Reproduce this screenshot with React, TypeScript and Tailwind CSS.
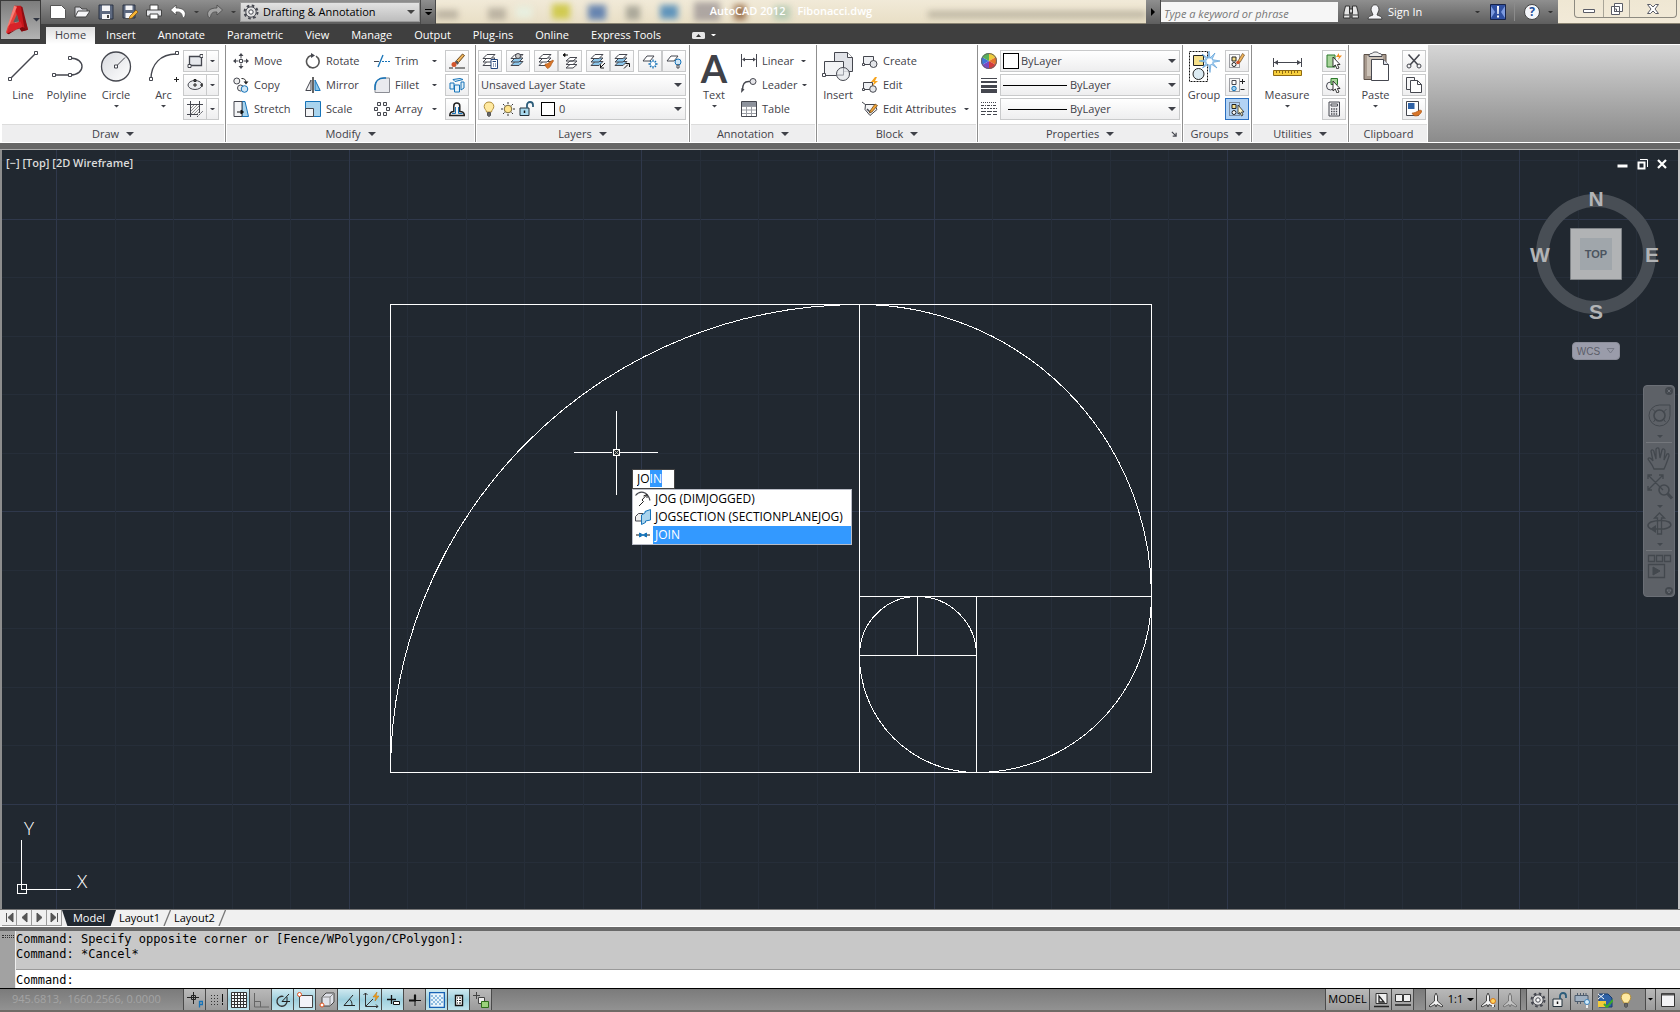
import { useEffect, useRef } from "react";
import type { ReactNode } from "react";
import clsx from "clsx";

interface ChildrenProps {
  children: ReactNode;
}

interface CaretProps {
  className?: string;
}

interface ToolProps {
  label: string;
  icon: ReactNode;
  menu?: boolean;
}

interface BigToolProps extends ToolProps {
  className: string;
}

interface PanelProps {
  title: string;
  className: string;
  menu?: boolean;
  launcher?: boolean;
  children: ReactNode;
}

const INK = "#45474f";
const BLUE = "#1673b8";

/* Small shared pieces */

const Caret = ({ className = "w-[5px] text-[#3f4148]" }: CaretProps) => (
  <svg viewBox="0 0 8 4" className={clsx("shrink-0", className)} fill="currentColor" aria-hidden="true">
    <path d="M0 0h8L4 4z" />
  </svg>
);

const Icon = ({ children }: ChildrenProps) => (
  <svg viewBox="0 0 16 16" className="size-4 shrink-0" fill="none" stroke={INK} aria-hidden="true">
    {children}
  </svg>
);

const BigIcon = ({ children }: ChildrenProps) => (
  <svg viewBox="0 0 32 32" className="size-8 shrink-0" fill="none" stroke={INK} aria-hidden="true">
    {children}
  </svg>
);

/* Icons: Draw */

const LineIcon = () => (
  <BigIcon>
    <path d="M3 29 28 4" strokeWidth="1.4" />
    <path d="M1.5 27.500h3v3h-3zM27.500 1.500h3v3h-3z" fill="#fff" />
  </BigIcon>
);

const PolylineIcon = () => (
  <BigIcon>
    <path d="M3 25h16M19 8c16 0 16 17 0 17" strokeWidth="1.4" />
    <path d="M1.500 23.500h3v3h-3zM17.500 23.500h3v3h-3zM17.500 6.500h3v3h-3z" fill="#fff" />
  </BigIcon>
);

const CircleIcon = () => (
  <BigIcon>
    <defs>
      <linearGradient id="disc" x1="0" y1="0" x2="1" y2="1">
        <stop offset="0" stopColor="#d9dbe0" />
        <stop offset="1" stopColor="#fff" />
      </linearGradient>
    </defs>
    <circle cx="16" cy="16.500" r="14.500" fill="url(#disc)" strokeWidth="1.300" />
    <path d="m16 16.500 9-9" />
    <path d="M14.500 15h3v3h-3z" fill="#fff" />
  </BigIcon>
);

const ArcIcon = () => (
  <BigIcon>
    <path d="M3 29C3 14 13 4 28 4" strokeWidth="1.400" />
    <path d="M1.500 27.500h3v3h-3zM27.500 1.500h3v3h-3z" fill="#fff" />
    <path d="M28.500 27v5M26 29.500h5" stroke="#222" />
  </BigIcon>
);

const RectangleIcon = () => (
  <Icon>
    <path d="M2.500 3.500h12v9h-12z" fill="#e6e8ec" strokeWidth="1.300" />
    <path d="M1 11.500h3v3H1zM13 1.500h3v3h-3z" fill="#fff" />
  </Icon>
);

const EllipseIcon = () => (
  <Icon>
    <ellipse cx="8" cy="8" rx="7" ry="4.500" fill="#eceef1" />
    <path d="M8 6v4M6 8h4M7 2.500h2v2H7zM14 7h2v2h-2z" stroke="#222" />
  </Icon>
);

const HatchIcon = () => (
  <Icon>
    <path d="M3.500 0v16M12.500 0v12M0 3.500h16M0 13.500h11" />
    <path d="M4 7l3-3M4 10l6-6M4 13l8-8M7 13l5-5M10 13l2-2" stroke="#777" strokeWidth=".8" />
    <path d="m10 16 6-6" strokeDasharray="2 1" />
  </Icon>
);

/* Icons: Modify */

const MoveIcon = () => (
  <Icon>
    <path d="M8 1.500v4M8 10.500v4M1.500 8h4M10.500 8h4M6.500 6.500h3v3h-3z" />
    <path d="m8 0 2.500 3h-5zM8 16l2.500-3h-5zM0 8l3-2.500v5zM16 8l-3-2.500v5z" fill={INK} stroke="none" />
  </Icon>
);

const CopyIcon = () => (
  <Icon>
    <circle cx="3.800" cy="4" r="3" fill="#eee" />
    <circle cx="7.500" cy="11" r="3" fill="#eee" />
    <circle cx="11.500" cy="12" r="3.300" fill="#cfe6f6" stroke={BLUE} />
    <path d="M8.500 1.500c3 0 4 1 4.500 3.500" stroke="#222" />
    <path d="M10.500 4.500h5L13 7.500z" fill="#222" stroke="none" />
  </Icon>
);

const StretchIcon = () => (
  <Icon>
    <path d="M9 .5h3L15.500 15.500H9z" fill="#a9d4ee" stroke={BLUE} />
    <path d="M1 .5h8v15H1z" fill="#f3f4f6" />
    <path d="M4 11h5M8 9l2.500 2L8 13z" stroke="#111" fill="#111" />
  </Icon>
);

const RotateIcon = () => (
  <Icon>
    <path d="M6 2.500a6.300 6.300 0 1 0 5 .6" stroke="#555" strokeWidth="1.600" />
    <path d="M6 0v5l4-2.500z" fill={INK} stroke="none" />
  </Icon>
);

const MirrorIcon = () => (
  <Icon>
    <path d="M6 3v10.500H.8z" fill="#f1f1f3" />
    <path d="M10 3v10.500h5.200z" fill="#8cc6ea" stroke={BLUE} />
    <path d="M8 0v16" stroke="#111" strokeWidth="1.300" />
  </Icon>
);

const ScaleIcon = () => (
  <Icon>
    <path d="M.5.500h15v15H.5z" fill="#a9d4ee" stroke={BLUE} />
    <path d="M.5 7.500h8v8h-8z" fill="#f3f4f6" />
  </Icon>
);

const TrimIcon = () => (
  <Icon>
    <path d="M0 8.500h5" />
    <path d="M8 8.500h8" stroke={BLUE} strokeDasharray="2 1" />
    <path d="m4 14 5-12" stroke={BLUE} strokeWidth="1.300" />
  </Icon>
);

const FilletIcon = () => (
  <Icon>
    <path d="M1 15.500V10C1 4 5 1 10 1h5.500v14.500z" fill="#e9eaee" stroke="#8b8d94" />
    <path d="M1 13v-3C1 4 5 1 10 1h2" stroke={BLUE} strokeWidth="1.500" />
  </Icon>
);

const ArrayIcon = () => (
  <Icon>
    <path d="M3.500 1.500h3v3h-3zM9.500 1.500h3v3h-3zM.5 6.500h3v3h-3zM12.500 6.500h3v3h-3zM3.500 11.500h3v3h-3zM9.500 11.500h3v3h-3z" fill="#f4f4f4" />
  </Icon>
);

const EraseIcon = () => (
  <Icon>
    <path d="m7.500 7.500 6-6.500 2 1.500-6 7z" fill="#efb45c" stroke="#6d4b20" />
    <path d="m7 7.500 3 2.500-1.500 1.800-3-2.500z" fill="#555" stroke="none" />
    <circle cx="5" cy="11.500" r="2.500" fill="#d2542c" stroke="none" />
    <path d="M0 15h4M6 15h10" stroke="#222" />
  </Icon>
);

const ExplodeIcon = () => (
  <Icon>
    <path d="M1 6h4v6H1zM5.500 8h5v7h-5zM12 5h3v6l-3 2zM4 2.500l7-1 3 1-8 2z" fill="#e2f1fa" stroke={BLUE} />
  </Icon>
);

const OffsetIcon = () => (
  <Icon>
    <path d="M.8 14.500c0-3 1-4 4-4V5a3 3 0 0 1 6 0v5.500c3 0 4.500 1 4.500 4z" stroke="#222" strokeWidth="1.500" />
    <path d="M3 12.500h3.500V6M9.500 6v6.500h4" stroke={BLUE} />
  </Icon>
);

/* Icons: Layers */

interface StackProps {
  fill?: string;
  children?: ReactNode;
}

const Stack = ({ fill = "#fff", children }: StackProps) => (
  <Icon>
    <path d="M1 12.500h8l4-4H5z" fill={fill} />
    <path d="M1 9h8l4-4H5z" fill={fill} />
    <path d="M1 5.500h8l4-4H5z" fill="#fff" />
    {children}
  </Icon>
);

const LayerPropsIcon = () => (
  <Stack>
    <path d="M9 6.500h6.500v9H9z" fill="#fff" stroke="#26467c" />
    <path d="M10.500 8.500h3.500M11 11h1M13 11h1M11 13h1M13 13h1" stroke="#26467c" />
  </Stack>
);

const LayerCurrentIcon = () => (
  <Stack fill="#8cc6ea">
    <circle cx="8" cy="3" r="2.500" fill="#ccc" />
  </Stack>
);

const LayerMatchIcon = () => (
  <Stack>
    <path d="M7 11c2 0 3-.5 4.500-2L15 7l.5 1-2 3c-.5 2-2 4-4 4.500-1-1-2.500-2.500-2.500-4.500z" fill="#d9762a" stroke="#a65412" strokeWidth=".6" />
  </Stack>
);

const LayerPreviousIcon = () => (
  <Icon>
    <path d="M4 15h7l4-3.500H8zM4 11.500h7L15 8H8zM4 8h7l4-3.500H8z" fill="#fff" />
    <path d="M6 2H2M3 .5 1 2l2 1.500z" stroke="#111" fill="#111" />
  </Icon>
);

const LayerIsolateIcon = () => (
  <Stack fill="#8cc6ea">
    <path d="m15 10-4 4M10.500 11.500v3.500h3.500" stroke="#111" />
  </Stack>
);

const LayerUnisolateIcon = () => (
  <Stack fill="#8cc6ea">
    <path d="m10 15.500 4-4M11.500 10.500h4V14" stroke="#111" />
  </Stack>
);

const LayerFreezeIcon = () => (
  <Icon>
    <path d="M1 8h7l4-5H5z" fill="#fff" />
    <path d="M11 6.500v9M6.500 11h9M8 8l6 6M14 8l-6 6" stroke={BLUE} strokeWidth="1.300" />
    <circle cx="11" cy="11" r="2.200" fill="#fff" stroke="none" />
  </Icon>
);

const LayerOffIcon = () => (
  <Icon>
    <path d="M1 8h7l4-5H5z" fill="#fff" />
    <circle cx="12" cy="9" r="3" fill="#cfe6f6" stroke={BLUE} />
    <path d="M11 12h2v3h-2z" fill="#fff" />
  </Icon>
);

const BulbIcon = () => (
  <Icon>
    <path d="M8 1c-3 0-4.800 2-4.800 4.500C3.200 8 5.500 9 5.500 11h5c0-2 2.300-3 2.300-5.500C12.800 3 11 1 8 1z" fill="#ffe9a0" stroke="#b08d3a" />
    <path d="M6.500 11.500h3v3l-1.500 1-1.500-1z" fill="#666" stroke="#555" />
  </Icon>
);

const SunIcon = () => (
  <Icon>
    <circle cx="8" cy="8" r="3.800" fill="#ffe48c" stroke="#7a6a3c" />
    <path d="M8 1v2M8 13v2M1 8h2M13 8h2M3 3l1.500 1.500M11.500 11.500 13 13M13 3l-1.500 1.500M3 13l1.500-1.500" stroke="#333" />
  </Icon>
);

interface UnlockProps {
  fill: string;
}

const UnlockIcon = ({ fill }: UnlockProps) => (
  <Icon>
    <path d="M1 7h9v7.500H1z" fill={fill} stroke="#23303a" />
    <path d="M8 7V4a3 3 0 0 1 6 0v2" stroke="#2c5c7a" strokeWidth="1.800" />
    <path d="M5.500 9.500V12" stroke="#111" strokeWidth="1.500" />
  </Icon>
);

/* Icons: Annotation and Block */

const LinearIcon = () => (
  <Icon>
    <path d="M.5 1v13M15.500 1v13M2 6.500h12" />
    <path d="m1 6.500 3-2v4zM15 6.500l-3-2v4z" fill={INK} stroke="none" />
  </Icon>
);

const LeaderIcon = () => (
  <Icon>
    <path d="M1.500 13c0-6 2-8.500 6-8.500H9" strokeWidth="1.300" />
    <path d="m0 16 .5-5 3 1.500z" fill={INK} stroke="none" />
    <circle cx="12" cy="4.500" r="3" fill="#e6e6ea" />
  </Icon>
);

const TableIcon = () => (
  <Icon>
    <path d="M1 1h14v4H1z" fill="#8d929c" stroke="none" />
    <path d="M.5 5.500h15M.5 9h15M.5 12.500h15M5.500 5v10.500M10.500 5v10.500" stroke="#9a9da4" />
    <path d="M.5.500h15v15H.5z" />
  </Icon>
);

const InsertIcon = () => (
  <BigIcon>
    <path d="M12.500 2.500h13l5 5v14h-18z" fill="#e1e3e8" />
    <path d="M25.500 2.500v5h5" fill="#fff" />
    <path d="M2.500 11.500h19v14h-19z" fill="#f3f4f6" />
    <path d="M.5 23.500h3v3h-3z" fill="#fff" />
    <circle cx="21" cy="24" r="6.500" fill="#e9ebef" fillOpacity=".85" />
    <path d="M21.500 18v7h-7" stroke="#9fa2aa" />
  </BigIcon>
);

const CreateBlockIcon = () => (
  <Icon>
    <path d="M1.500 3.500h10v8h-10z" fill="#eef0f3" />
    <path d="M.5 10.500h2v2h-2z" fill="#fff" />
    <circle cx="11.500" cy="11" r="3.500" fill="#e4e6ea" />
  </Icon>
);

const EditBlockIcon = () => (
  <Icon>
    <path d="M1.500 5.500h9v7h-9z" fill="#eef0f3" />
    <path d="M.5 11.500h2v2h-2z" fill="#fff" />
    <circle cx="11" cy="12" r="3.300" fill="#e4e6ea" />
    <path d="m13 0-4 5h3l-1.500 4L16 4h-3l2-4z" fill="#f7a41d" stroke="none" />
  </Icon>
);

const EditAttributesIcon = () => (
  <Icon>
    <path d="M0 1l4 3M3.500 3.500h9l2.500 5-7 6-5-6z" fill="#f5f5f6" />
    <path d="m5 8 3 3 2-2" strokeWidth="1.500" />
    <path d="m8 10 5-7 2.500 1.500L10 11l-2.500 1z" fill="#f1a337" stroke="#5e3d10" strokeWidth=".7" />
  </Icon>
);

/* Icons: Properties and Groups */

const ColorWheelIcon = () => (
  <Icon>
    <g stroke="none">
      <path d="M8 8 8 0A8 8 0 0 1 15 4z" fill="#eecb3a" />
      <path d="M8 8 15 4A8 8 0 0 1 15 12z" fill="#e5742b" />
      <path d="M8 8 15 12A8 8 0 0 1 8 16z" fill="#d33b3b" />
      <path d="M8 8 8 16A8 8 0 0 1 1 12z" fill="#7a49c2" />
      <path d="M8 8 1 12A8 8 0 0 1 1 4z" fill="#3f76d8" />
      <path d="M8 8 1 4A8 8 0 0 1 8 0z" fill="#58b15a" />
    </g>
    <circle cx="8" cy="8" r="7.500" stroke="#666" />
  </Icon>
);

const LineweightIcon = () => (
  <Icon>
    <path d="M0 1.500h16" />
    <path d="M0 5h16" strokeWidth="2" />
    <path d="M0 9.500h16" strokeWidth="3" />
    <path d="M0 14h16" strokeWidth="4" />
  </Icon>
);

const LinetypeIcon = () => (
  <Icon>
    <path d="M0 1.500h16" strokeDasharray="1 1" />
    <path d="M0 4.500h16" strokeDasharray="3 1 1 1" />
    <path d="M0 7.500h16" strokeDasharray="2 1" />
    <path d="M0 10.500h16" strokeDasharray="5 1" />
    <path d="M0 13.500h16" strokeDasharray="4 2" />
  </Icon>
);

const GroupIcon = () => (
  <BigIcon>
    <path d="M1.500 1.500h18v30h-18z" stroke="#111" strokeDasharray="2 1" />
    <path d="M5.500 5.500h10v10h-10z" fill="#f7e08a" stroke="#222" />
    <circle cx="10.500" cy="24" r="5.500" fill="#dcebf3" stroke="#222" />
    <path
      d="m21 1 1 7L27 3l-3 6.500L32 11l-7.500 1.500L29 18l-6-4-1 8.500-1.500-8.500-6 4 4-5.500L11 11l7.500-1.500L14 4l6 4z"
      fill="#a5d0f2"
      stroke="#4a92d0"
      strokeWidth=".6"
    />
    <circle cx="21.500" cy="11.500" r="3" fill="#fff" stroke="none" />
  </BigIcon>
);

const GroupDots = ({ children }: ChildrenProps) => (
  <Icon>
    <path d="M.5 1.500h10v13H.5z" strokeDasharray="1 1" />
    {children}
  </Icon>
);

const UngroupIcon = () => (
  <GroupDots>
    <path d="M3 4h4v4H3z" fill="#f7e08a" stroke="#222" />
    <circle cx="5" cy="11.500" r="2" fill="#fff" stroke="#222" />
    <path d="m9 8 4.500-7.500L15.500 2 11 9.500z" fill="#efb45c" stroke="#6d4b20" strokeWidth=".7" />
    <circle cx="9" cy="9.500" r="1.800" fill="#d2542c" stroke="none" />
  </GroupDots>
);

const GroupEditIcon = () => (
  <GroupDots>
    <path d="M3 3.500h4v4H3z" fill="#fff" />
    <circle cx="5" cy="11.500" r="2.200" fill="#9ed0f0" stroke={BLUE} />
    <path d="M11 4.500h5M13.500 2v5M11.500 12.500h4" stroke="#222" />
  </GroupDots>
);

const GroupSelectIcon = () => (
  <GroupDots>
    <path d="M3 3.500h4v4H3z" fill="#f7e08a" stroke="#222" />
    <circle cx="5" cy="11.500" r="2" fill="#fff" stroke="#222" />
    <path d="M9 4v9l2-1.500 1.500 3.500 1.500-1-1.500-3h2.500z" fill="#fff7c8" stroke="#222" strokeWidth=".8" />
  </GroupDots>
);

/* Icons: Utilities and Clipboard */

const MeasureIcon = () => (
  <BigIcon>
    <path d="M2.500 8v9M30.500 8v9M3 12.500h27" />
    <path d="m3 12.500 4-2.500v5zM30 12.500 26 10v5z" fill={INK} stroke="none" />
    <path d="M2.500 20.500h28v5h-28z" fill="#f7cf3c" stroke="#8f6a12" />
    <path d="M5.500 21v2M8.500 21v2M11.500 21v3M14.500 21v2M17.500 21v2M20.500 21v3M23.500 21v2M26.500 21v2" stroke="#8f6a12" />
  </BigIcon>
);

const Arrowhead = () => (
  <path d="M7 4v10l2.300-2 1.700 4 2-1-1.700-3.500H14z" fill="#fff" stroke="#222" strokeWidth=".9" />
);

const QuickSelectIcon = () => (
  <Icon>
    <path d="M1 2h8v12H1z" fill="#a8d49a" stroke="#2c7a2c" />
    <path d="m13 0-3 4h3l-1 3 4-4.500h-3z" fill="#f08c1e" stroke="none" />
    <Arrowhead />
  </Icon>
);

const SelectAllIcon = () => (
  <Icon>
    <circle cx="4.500" cy="9" r="4" />
    <path d="M5 1.500h6.500v6H5z" fill="#a8d49a" stroke="#2c7a2c" />
    <Arrowhead />
  </Icon>
);

const CalculatorIcon = () => (
  <Icon>
    <path d="M3 1h10.500v14H3z" fill="#f1f1f3" />
    <path d="M5 3h6.500v2H5z" fill="#fff" />
    <path d="M5 8h7M5 10.500h7M5 13h7" strokeDasharray="1.400 1" strokeWidth="1.400" />
  </Icon>
);

const PasteIcon = () => (
  <BigIcon>
    <path d="M4 4.500h22v25H4z" fill="#a89a8e" stroke="#5c5148" />
    <path d="M7 6h16v20H7z" fill="#cdc3b8" stroke="none" />
    <path d="M9 6.500c0-3 2-3 3-3 1-2 6-2 7 0 1 0 3 0 3 3z" fill="#eee" />
    <path d="M11.500 9.500h12l5 5v16h-17z" fill="#fff" />
    <path d="M23.500 9.500v5h5" fill="#dfe2ea" />
  </BigIcon>
);

const CutIcon = () => (
  <Icon>
    <path d="M2.500 1.500 12 12M13.500 1.500 4 12" strokeWidth="1.600" />
    <circle cx="3" cy="13" r="2" />
    <circle cx="13" cy="13" r="2" />
  </Icon>
);

const CopyClipIcon = () => (
  <Icon>
    <path d="M.5.500h8v12h-8z" fill="#f6f6f7" />
    <path d="M4.500 3.500h7l4 4v8h-11z" fill="#fff" />
    <path d="M11.500 3.500v4h4" />
  </Icon>
);

const MatchPropsIcon = () => (
  <Icon>
    <path d="M.5.500h12v14H.5z" fill="#fff" />
    <path d="M2 2h6.500v6H2z" fill="#2f62a6" stroke="none" />
    <path d="M6 12c3 0 4-1 8-3l2 1c-1 3-4 5-6 5-2 0-3-1-4-3z" fill="#d9762a" stroke="#a65412" strokeWidth=".6" />
  </Icon>
);

/* Ribbon controls */

const SMALL_BUTTON =
  "flex h-[22px] items-center justify-center border border-[#c9cacb] bg-gradient-to-b from-white to-[#eeeeef]";

const BigTool = ({ label, icon, menu, className }: BigToolProps) => (
  <button type="button" className={clsx("flex h-[72px] shrink-0 flex-col items-center", className)}>
    <span className="flex h-[37px] items-start justify-center">{icon}</span>
    <span className="leading-4">{label}</span>
    {menu && <Caret className="mt-[2px] w-[5px] text-[#3f4148]" />}
  </button>
);

const RowTool = ({ label, icon, menu }: ToolProps) => (
  <button type="button" className="flex h-[22px] w-full items-center gap-[5px] whitespace-nowrap">
    {icon}
    <span className="leading-4">{label}</span>
    {menu && <Caret className="mr-[8px] ml-auto w-[5px] text-[#3f4148]" />}
  </button>
);

const BoxTool = ({ label, icon }: ToolProps) => (
  <button type="button" aria-label={label} className={clsx(SMALL_BUTTON, "w-6 shrink-0")}>
    {icon}
  </button>
);

const SplitTool = ({ label, icon }: ToolProps) => (
  <div className="flex">
    <BoxTool label={label} icon={icon} />
    <button type="button" aria-label={`${label} options`} className={clsx(SMALL_BUTTON, "w-3 border-l-0")}>
      <Caret />
    </button>
  </div>
);

const PairTool = ({ tools }: { tools: ToolProps[] }) => (
  <div className="flex">
    {tools.map((tool) => (
      <BoxTool key={tool.label} {...tool} />
    ))}
  </div>
);

const Column = ({ className, children }: { className?: string; children: ReactNode }) => (
  <div className={clsx("flex flex-col gap-[2px]", className)}>{children}</div>
);

interface ComboProps {
  label: string;
  value: string;
  before?: ReactNode;
}

const Combo = ({ label, value, before }: ComboProps) => (
  <label className={clsx(SMALL_BUTTON, "relative w-full pl-[2px]")}>
    {before}
    <select aria-label={label} className="h-full min-w-0 flex-1 appearance-none bg-transparent outline-none">
      <option>{value}</option>
    </select>
    <Caret className="pointer-events-none absolute right-[3px] w-2 text-[#3f4148]" />
  </label>
);

const Panel = ({ title, className, menu = true, launcher, children }: PanelProps) => (
  <section
    aria-label={title}
    className={clsx("flex shrink-0 flex-col border-r border-[#8f8f8f] bg-white pt-[5px]", className)}
  >
    <div className="flex h-[74px] items-start">{children}</div>
    <footer className="relative mx-px flex h-[18px] items-center justify-center gap-[7px] border-t border-[#dcdcdc] bg-[#eeeeef] pt-px">
      <span>{title}</span>
      {menu && <Caret className="w-2 text-[#3f4148]" />}
      {launcher && (
        <button type="button" aria-label={`${title} settings`} className="absolute right-1">
          <svg viewBox="0 0 7 7" className="size-[6px]" fill="none" stroke={INK} aria-hidden="true">
            <path d="m1 1 5 5M6 2v4H2" strokeWidth="1.400" />
          </svg>
        </button>
      )}
    </footer>
  </section>
);

const Ribbon = () => (
  <div className="flex h-[99px] shrink-0 border-y border-l border-white bg-gradient-to-b from-[#d6d6d6] to-[#8b8b8b] text-[#3f4148]">
    <Panel title="Draw" className="w-[225px]">
      <BigTool label="Line" icon={<LineIcon />} className="w-[44px]" />
      <BigTool label="Polyline" icon={<PolylineIcon />} className="w-[43px]" />
      <BigTool label="Circle" icon={<CircleIcon />} menu className="w-[56px]" />
      <BigTool label="Arc" icon={<ArcIcon />} menu className="w-[39px]" />
      <Column>
        <SplitTool label="Rectangle" icon={<RectangleIcon />} />
        <SplitTool label="Ellipse" icon={<EllipseIcon />} />
        <SplitTool label="Hatch" icon={<HatchIcon />} />
      </Column>
    </Panel>

    <Panel title="Modify" className="w-[250px]">
      <Column className="w-[79px] pl-[7px]">
        <RowTool label="Move" icon={<MoveIcon />} />
        <RowTool label="Copy" icon={<CopyIcon />} />
        <RowTool label="Stretch" icon={<StretchIcon />} />
      </Column>
      <Column className="w-[69px]">
        <RowTool label="Rotate" icon={<RotateIcon />} />
        <RowTool label="Mirror" icon={<MirrorIcon />} />
        <RowTool label="Scale" icon={<ScaleIcon />} />
      </Column>
      <Column className="w-[71px]">
        <RowTool label="Trim" icon={<TrimIcon />} menu />
        <RowTool label="Fillet" icon={<FilletIcon />} menu />
        <RowTool label="Array" icon={<ArrayIcon />} menu />
      </Column>
      <Column>
        <BoxTool label="Erase" icon={<EraseIcon />} />
        <BoxTool label="Explode" icon={<ExplodeIcon />} />
        <BoxTool label="Offset" icon={<OffsetIcon />} />
      </Column>
    </Panel>

    <Panel title="Layers" className="w-[214px]">
      <Column className="w-[210px] pl-[2px]">
        <div className="flex gap-1">
          <BoxTool label="Layer properties" icon={<LayerPropsIcon />} />
          <BoxTool label="Make current" icon={<LayerCurrentIcon />} />
          <PairTool
            tools={[
              { label: "Match layer", icon: <LayerMatchIcon /> },
              { label: "Previous layer", icon: <LayerPreviousIcon /> },
            ]}
          />
          <PairTool
            tools={[
              { label: "Isolate layer", icon: <LayerIsolateIcon /> },
              { label: "Unisolate layer", icon: <LayerUnisolateIcon /> },
            ]}
          />
          <PairTool
            tools={[
              { label: "Freeze layer", icon: <LayerFreezeIcon /> },
              { label: "Turn layer off", icon: <LayerOffIcon /> },
            ]}
          />
        </div>
        <Combo label="Layer state" value="Unsaved Layer State" />
        <Combo
          label="Layer"
          value="0"
          before={
            <span className="mr-1 flex items-center gap-[3px]">
              <BulbIcon />
              <SunIcon />
              <UnlockIcon fill="#a9d9ee" />
              <span className="ml-[3px] size-[14px] border border-black bg-white" />
            </span>
          }
        />
      </Column>
    </Panel>

    <Panel title="Annotation" className="w-[127px]">
      <BigTool
        label="Text"
        icon={
          <span className="[font-family:'Lato','Open_Sans',sans-serif] text-[38px] leading-9 font-bold">A</span>
        }
        menu
        className="w-[48px]"
      />
      <Column className="w-[76px] pl-[3px]">
        <RowTool label="Linear" icon={<LinearIcon />} menu />
        <RowTool label="Leader" icon={<LeaderIcon />} menu />
        <RowTool label="Table" icon={<TableIcon />} />
      </Column>
    </Panel>

    <Panel title="Block" className="w-[161px]">
      <BigTool label="Insert" icon={<InsertIcon />} className="w-[42px]" />
      <Column className="w-[118px] pl-[3px]">
        <RowTool label="Create" icon={<CreateBlockIcon />} />
        <RowTool label="Edit" icon={<EditBlockIcon />} />
        <RowTool label="Edit Attributes" icon={<EditAttributesIcon />} menu />
      </Column>
    </Panel>

    <Panel title="Properties" className="w-[205px]" launcher>
      <Column className="w-[22px] items-center">
        <span className="flex h-[22px] items-center"><ColorWheelIcon /></span>
        <span className="flex h-[22px] items-center"><LineweightIcon /></span>
        <span className="flex h-[22px] items-center"><LinetypeIcon /></span>
      </Column>
      <Column className="w-[180px]">
        <Combo
          label="Object color"
          value="ByLayer"
          before={<span className="mr-[2px] size-4 shrink-0 border border-black bg-white" />}
        />
        <Combo
          label="Lineweight"
          value="ByLayer"
          before={<span className="mr-[3px] h-px w-16 shrink-0 bg-black" />}
        />
        <Combo
          label="Linetype"
          value="ByLayer"
          before={<span className="mr-[3px] ml-[5px] h-px w-[59px] shrink-0 bg-black" />}
        />
      </Column>
    </Panel>

    <Panel title="Groups" className="w-[69px]">
      <BigTool label="Group" icon={<GroupIcon />} className="w-[42px]" />
      <Column>
        <BoxTool label="Ungroup" icon={<UngroupIcon />} />
        <BoxTool label="Edit group" icon={<GroupEditIcon />} />
        <button
          type="button"
          aria-label="Group selection"
          aria-pressed="true"
          className="flex h-[22px] w-6 items-center justify-center border border-[#2a6fc0] bg-[#b3d3f4]"
        >
          <GroupSelectIcon />
        </button>
      </Column>
    </Panel>

    <Panel title="Utilities" className="w-[97px]">
      <BigTool label="Measure" icon={<MeasureIcon />} menu className="w-[70px]" />
      <Column>
        <BoxTool label="Quick select" icon={<QuickSelectIcon />} />
        <BoxTool label="Select all" icon={<SelectAllIcon />} />
        <BoxTool label="Calculator" icon={<CalculatorIcon />} />
      </Column>
    </Panel>

    <Panel title="Clipboard" className="w-[79px] border-r-0" menu={false}>
      <BigTool label="Paste" icon={<PasteIcon />} menu className="w-[53px]" />
      <Column>
        <BoxTool label="Cut" icon={<CutIcon />} />
        <BoxTool label="Copy clip" icon={<CopyClipIcon />} />
        <BoxTool label="Match properties" icon={<MatchPropsIcon />} />
      </Column>
    </Panel>
  </div>
);

/* Title bar */

const CHROME = "bg-gradient-to-b from-[#8f8f8f] to-[#5e5e5e]";

const AppLogo = () => (
  <svg viewBox="0 0 26 34" className="h-[33px] w-[25px]" aria-hidden="true">
    <path d="M10 1 19 3 15 10 5 32 1 30z" fill="#e8413a" />
    <path d="M10 1 17 1 25 27 18 29z" fill="#c9161b" />
    <path d="M17 1 19 3 25 27 21 25z" fill="#8e0d12" />
    <path d="M5 21 17 18 19 24 2 31z" fill="#d8232a" />
    <path d="m2 31 17-7 6 3-7 2-3-4-11 7z" fill="#7d0a0f" />
    <path d="m9 19 4-9 2 8z" fill="#5e5e5e" />
    <path d="m10 1 3 1-8 19-3 4z" fill="#f58077" />
  </svg>
);

const QUICK_TOOLS = [
  {
    label: "New",
    drawing: <path d="M.5 1.500h11l4 4v9H.5z" fill="#fff" stroke="#555" />,
  },
  {
    label: "Open",
    drawing: (
      <>
        <path d="M1 13V3h5l2 2h5v2" fill="#dcdde2" stroke="#444" />
        <path d="m1 13 3-6h12l-4 6z" fill="#f6f6f8" stroke="#444" />
      </>
    ),
  },
  {
    label: "Save",
    drawing: (
      <>
        <path d="M1 1h14v14H1z" fill="#5d6980" stroke="#2b3242" />
        <path d="M4 1.500h8V7H4zM4 10h8v5H4z" fill="#f4f4f6" stroke="none" />
        <path d="M9 11h2v3H9z" fill="#444" stroke="none" />
      </>
    ),
  },
  {
    label: "Save as",
    drawing: (
      <>
        <path d="M1 1h12v13H1z" fill="#5d6980" stroke="#2b3242" />
        <path d="M3.500 1.500h7V6h-7zM3.500 9h7v5h-7z" fill="#f4f4f6" stroke="none" />
        <path d="m7 15 1-3 6-6 2 2-6 6z" fill="#f5b335" stroke="#7a4d10" strokeWidth=".7" />
      </>
    ),
  },
  {
    label: "Plot",
    drawing: (
      <>
        <path d="M4 6V1h8v5" fill="#fff" stroke="#444" />
        <path d="M.5 6h15v6H.5z" fill="#e6e7ea" stroke="#444" />
        <path d="M4 10h8v5H4z" fill="#fff" stroke="#444" />
      </>
    ),
  },
];

const UndoArrow = ({ className }: { className: string }) => (
  <svg viewBox="0 0 16 16" className={clsx("size-4 shrink-0", className)} aria-hidden="true">
    <path d="M6 1 .5 6 6 11V8c4-.5 6 1 6.500 5 .5 1 1.500 1 2 0C17 8 14 4 6 4z" fill="currentColor" stroke="#444" strokeWidth=".7" />
  </svg>
);

const GearShape = () => (
  <>
    <circle cx="8" cy="8" r="6.500" strokeWidth="2" strokeDasharray="2.600 2.500" />
    <circle cx="8" cy="8" r="5.200" fill="#e4e4e4" />
    <circle cx="8" cy="8" r="2.200" fill="#fff" />
  </>
);

/* Colours of the window behind, seen through the glass caption */
const GlassCaption = () => (
  <div className="relative flex h-full min-w-0 flex-1 items-center justify-center gap-3 overflow-hidden border-b border-[#8a8473] bg-gradient-to-b from-[#f1ead8] to-[#e9dfc6] text-white">
    <svg className="absolute inset-0 size-full blur-[3px]" aria-hidden="true">
      <path d="M0 10h22v9H0zM52 8h18v12H52z" fill="#8b8478" opacity=".5" />
      <path d="M80 6h16v12H80z" fill="#e8efe0" />
      <path d="M116 4h18v15h-18z" fill="#d0ca50" />
      <path d="M152 5h18v15h-18z" fill="#6684b0" />
      <path d="M190 6h14v14h-14z" fill="#9a988c" opacity=".8" />
      <path d="M224 5h18v14h-18z" fill="#5f94bb" />
      <path d="M258 2h26v19h-26z" fill="#9d9696" opacity=".8" />
      <path d="M298 5h12v15h-12z" fill="#9c7350" />
      <path d="M338 6h16v14h-16z" fill="#b6cbb4" />
      <path d="M492 11h218v7H492z" fill="#8f897a" opacity=".5" />
    </svg>
    <span className="relative font-semibold">AutoCAD 2012</span>
    <span className="relative font-semibold">Fibonacci.dwg</span>
  </div>
);

const TitleBar = () => (
  <div className={clsx("flex h-6 items-center", CHROME)}>
    <div className="flex h-full items-center pl-[9px]">
      <div className="flex items-center gap-2">
        {QUICK_TOOLS.map((tool) => (
          <button key={tool.label} type="button" aria-label={tool.label}>
            <svg viewBox="0 0 16 16" className="size-4" aria-hidden="true">{tool.drawing}</svg>
          </button>
        ))}
      </div>
      <button type="button" aria-label="Undo" className="ml-2 flex items-center gap-2">
        <UndoArrow className="text-white" />
        <Caret className="w-[5px] text-[#3b3b3b]" />
      </button>
      <button type="button" aria-label="Redo" className="mr-1 ml-2 flex items-center gap-2">
        <UndoArrow className="-scale-x-100 text-[#a5a5a5]" />
        <Caret className="w-[5px] text-[#3b3b3b]" />
      </button>
    </div>
    <label className="relative flex h-5 w-[180px] items-center gap-1 border border-[#9a9a9a] bg-gradient-to-b from-[#e2e2e2] to-[#bdbdbd] pl-[2px] text-black">
      <Icon><GearShape /></Icon>
      <select aria-label="Workspace" className="min-w-0 flex-1 appearance-none bg-transparent outline-none">
        <option>Drafting &amp; Annotation</option>
      </select>
      <Caret className="pointer-events-none absolute right-1 w-2 text-[#444]" />
    </label>
    <button
      type="button"
      aria-label="Customize quick access"
      className="flex h-full w-4 flex-col items-center justify-center gap-[2px] border-x border-[#4a4a4a] text-black"
    >
      <span className="h-px w-[7px] bg-black" />
      <Caret className="w-[7px]" />
    </button>
    <GlassCaption />
    <button
      type="button"
      aria-label="Collapse search"
      className="flex h-full w-[15px] items-center justify-center border-r border-[#4a4a4a]"
    >
      <svg viewBox="0 0 4 8" className="w-1" aria-hidden="true"><path d="M0 0v8l4-4z" /></svg>
    </button>
    <input
      type="text"
      aria-label="Search"
      placeholder="Type a keyword or phrase"
      className="h-[20px] w-[177px] bg-[#f6f6f6] px-[3px] pt-[2px] italic outline-none placeholder:text-[#777]"
    />
    <div className="flex h-full w-[220px] items-center pl-[5px] text-white">
      <button type="button" aria-label="Find">
        <svg viewBox="0 0 16 16" className="size-4" fill="#e6e6e6" stroke="#333" aria-hidden="true">
          <path d="M2.500 2h4v3l.5 9H.5l.5-6zM9.500 2h4l1.500 6 .5 6H9l.5-9zM6.500 5h3v4h-3z" />
          <path d="M1 11h5M10 11h5" />
        </svg>
      </button>
      <button type="button" className="ml-2 flex flex-1 items-center gap-[5px]">
        <svg viewBox="0 0 16 16" className="size-4" fill="#f3f4f8" stroke="#333" strokeWidth=".8" aria-hidden="true">
          <path d="M1 15c0-3 3-3 5-4L4 6c0-7 8-7 8 0l-2 5c2 1 5 1 5 4z" />
        </svg>
        <span className="pt-px">Sign In</span>
        <Caret className="ml-auto w-[5px] text-[#333]" />
      </button>
      <button type="button" aria-label="Exchange" className="mr-2 ml-[10px]">
        <svg viewBox="0 0 16 16" className="size-4" aria-hidden="true">
          <path d="M.5.500h15v15H.5z" fill="#2f4fa0" stroke="#16234a" />
          <path d="m1 2 4 6-4 6zM15 2l-4 6 4 6z" fill="#7d9be0" />
          <path d="M7 2h2l-.3 8H7.300zM7 11.500h2v2H7z" fill="#fff" />
        </svg>
      </button>
      <button
        type="button"
        aria-label="Help"
        className="flex h-[18px] items-center gap-2 border-l border-[#8b8b8b] pr-[5px] pl-[9px]"
      >
        <span className="flex size-4 items-center justify-center rounded-full border border-[#444] bg-[#f4f6fa] text-[12px] leading-3 font-bold text-[#1f4e9c]">
          ?
        </span>
        <Caret className="w-[5px] text-[#333]" />
      </button>
    </div>
    <div className="flex h-full w-[122px] items-start border-b border-[#8a8473] bg-gradient-to-b from-[#efe7d3] to-[#f2ead8] pl-4">
      <div className="flex h-[18px] w-[103px] rounded-b border border-t-0 border-[#8d8a80] text-[#5a5c66]">
        <button type="button" aria-label="Minimize" className="flex w-7 items-center justify-center">
          <svg viewBox="0 0 12 10" className="w-3" fill="#fff" stroke="currentColor" aria-hidden="true">
            <path d="M.5 5.500h11v3H.5z" />
          </svg>
        </button>
        <button
          type="button"
          aria-label="Restore"
          className="flex w-[27px] items-center justify-center border-x border-[#a9a598]"
        >
          <svg viewBox="0 0 12 12" className="w-3" fill="#fff" stroke="currentColor" aria-hidden="true">
            <path d="M3.500.500h8v8h-8zM.5 3.500h8v8h-8zM3.500 6h2v2.500h-2z" />
          </svg>
        </button>
        <button type="button" aria-label="Close" className="flex flex-1 items-center justify-center">
          <svg viewBox="0 0 12 10" className="w-3" fill="#fff" stroke="currentColor" aria-hidden="true">
            <path d="M.5.500h3L6 3 8.500.500h3L8 5l3.500 4.500h-3L6 7 3.500 9.500h-3L4 5z" />
          </svg>
        </button>
      </div>
    </div>
  </div>
);

const RIBBON_TABS = [
  "Home",
  "Insert",
  "Annotate",
  "Parametric",
  "View",
  "Manage",
  "Output",
  "Plug-ins",
  "Online",
  "Express Tools",
];

const Header = () => (
  <header className="flex shrink-0 bg-[#3f3f3f]">
    <button
      type="button"
      aria-label="Application menu"
      className="flex h-10 w-[41px] items-center gap-1 border border-[#3a3a3a] bg-gradient-to-b from-[#7c7c7c] to-[#b3b3b3] pl-1"
    >
      <AppLogo />
      <Caret className="w-[7px] text-[#2f3440]" />
    </button>
    <div className="min-w-0 flex-1">
      <TitleBar />
      <nav aria-label="Ribbon tabs" className="flex h-5 items-end pl-[5px] text-white">
        {RIBBON_TABS.map((tab, i) => (
          <button
            key={tab}
            type="button"
            className={clsx(
              "h-[17px] pb-[2px] leading-[15px] whitespace-nowrap",
              i === 0 ? "bg-gradient-to-b from-[#dedede] to-white px-[9px] text-[#3f4148]" : "px-[11px]",
            )}
          >
            {tab}
          </button>
        ))}
        <button type="button" aria-label="Minimize ribbon" className="ml-5 flex h-[18px] items-center gap-[6px]">
          <svg viewBox="0 0 13 7" className="w-[13px]" aria-hidden="true">
            <rect width="13" height="7" rx="1.500" fill="#e6e6e6" />
            <path d="M4 5h5L6.500 2z" fill="#333" />
          </svg>
          <Caret className="w-[5px] text-white" />
        </button>
      </nav>
    </div>
  </header>
);

/* Drawing area */

const GRID_STEP = 58.53;
const GRID_LINES = Array.from({ length: 60 }, (_, i) => i);

const gridStroke = (i: number, offset: number) => (i % 5 === offset ? "#2f384b" : "#262e39");

const ModelDrawing = () => (
  <svg className="absolute inset-0 size-full" fill="none" aria-label="Fibonacci spiral drawing">
    <g shapeRendering="crispEdges">
      {GRID_LINES.map((i) => {
        const y = Math.round(10 + i * GRID_STEP) + 0.5;
        return <path key={i} d={`M0 ${y}H4000`} stroke={gridStroke(i, 1)} />;
      })}
      {GRID_LINES.map((i) => {
        const x = Math.round(54 + i * GRID_STEP) + 0.5;
        return <path key={i} d={`M${x} 0V4000`} stroke={gridStroke(i, 0)} />;
      })}
    </g>

    {/* Golden rectangles and the arcs through them */}
    <g stroke="#fff" shapeRendering="crispEdges">
      <path d="M388.500 154.500h761v468h-761z" />
      <path d="M857.500 154.500v468M857.500 446.500h292M974.500 446.500v176M857.500 505.500h117M915.500 446.500v59" />
      <path d="M388.500 622.500A469 468 0 0 1 857.500 154.500A292 292 0 0 1 1149.500 446.500A175 176 0 0 1 974.500 622.500A117 117 0 0 1 857.500 505.500A58 59 0 0 1 915.500 446.500A59 59 0 0 1 974.500 505.500" />
    </g>

    {/* Crosshair */}
    <g stroke="#fff" shapeRendering="crispEdges">
      <path d="M572 302.500h38M618 302.500h38M614.500 261v38M614.500 306v39M611.500 299.500h6v6h-6z" />
      <path d="m612 300 5 5M617 300l-5 5" stroke="#b5b5a5" />
    </g>

    {/* UCS icon */}
    <g stroke="#fff" shapeRendering="crispEdges">
      <path d="M19.500 690v49.500H69M15.500 734.500h9v9h-9z" />
    </g>
    <g fill="#fff" className="text-[19px] font-light">
      <text x="22" y="685">Y</text>
      <text x="75" y="738">X</text>
    </g>
  </svg>
);

const SUGGESTIONS = [
  {
    name: "JOG (DIMJOGGED)",
    icon: (
      <Icon>
        <path d="M.5 4.500c4-5 12-5 14.500 5" strokeWidth="1.200" />
        <path d="m4 15 4.500-4.500L7 9l4.500-5M12 3.500 8.500 5M12 3.500V7" stroke="#222" />
      </Icon>
    ),
  },
  {
    name: "JOGSECTION (SECTIONPLANEJOG)",
    icon: (
      <Icon>
        <path d="M.5 12V7.500l3-3H8V12z" fill="#eee" />
        <path d="M6.500 6 10 4V2.500l5.500-2v10.500L10.500 12v1.500l-4 2z" fill="#a9d4ee" stroke={BLUE} />
      </Icon>
    ),
  },
  {
    name: "JOIN",
    icon: (
      <Icon>
        <path d="M1 8h4M11 8h4" stroke="#111" />
        <path d="M4.500 6v4L8 8zM11.500 6v4L8 8z" fill={BLUE} stroke={BLUE} />
      </Icon>
    ),
  },
];

const DynamicInput = () => {
  const input = useRef<HTMLInputElement>(null);

  // Autocomplete keeps the completed part selected
  useEffect(() => {
    input.current?.focus();
    input.current?.setSelectionRange(2, 4);
  }, []);

  return (
    <div className="absolute top-[319px] left-[630px] w-[220px] text-[12px] text-black">
      <input
        ref={input}
        type="text"
        aria-label="Command input"
        defaultValue="JOIN"
        className="block h-5 w-[43px] border border-[#444] bg-white pb-px pl-1 outline-none selection:bg-[#3399ff] selection:text-white"
      />
      <ul role="listbox" aria-label="Command suggestions" className="border border-[#b9bcc6] bg-white">
        {SUGGESTIONS.map(({ name, icon }) => (
          <li key={name} role="option" aria-selected={name === "JOIN"} className="flex h-[18px] items-center">
            <span className="flex w-5 justify-center">{icon}</span>
            <span
              className={clsx(
                "h-full flex-1 pl-[2px] leading-[18px] whitespace-nowrap",
                name === "JOIN" && "bg-[#3399ff] text-white",
              )}
            >
              {name}
            </span>
          </li>
        ))}
      </ul>
    </div>
  );
};

const ViewCube = () => (
  <div className="absolute top-[35px] right-[10px] flex w-[144px] flex-col items-center">
    <svg viewBox="0 0 144 138" className="w-[144px]" aria-label="View cube">
      <circle cx="72" cy="69" r="53.500" fill="none" stroke="#484e55" strokeWidth="13" />
      <path d="M46.500 43.500h51v51h-51z" fill="#b1b3b5" stroke="#7e8286" />
      <path d="M56 53h32v32H56z" fill="#a0a6ab" />
      <g
        fill="#b2b4b6"
        textAnchor="middle"
        className="[font-family:'Liberation_Sans',Arial,sans-serif] text-[21px] font-bold"
      >
        <text x="72" y="21">N</text>
        <text x="72" y="134">S</text>
        <text x="16" y="77">W</text>
        <text x="128" y="77">E</text>
      </g>
      <text
        x="72"
        y="73"
        textAnchor="middle"
        fill="#4c5560"
        className="[font-family:'Liberation_Sans',Arial,sans-serif] text-[11px] font-bold"
      >
        TOP
      </text>
    </svg>
    <button
      type="button"
      className="mt-[19px] flex h-[18px] w-12 items-center justify-center gap-[6px] rounded border border-[#8b8d99] bg-[#9a9caa] [font-family:'Liberation_Sans',Arial,sans-serif] text-[10px] text-[#5a5c68]"
    >
      WCS
      <svg viewBox="0 0 9 6" className="w-[9px]" fill="none" stroke="#777a86" aria-hidden="true">
        <path d="M1 .5h7L4.500 5z" />
      </svg>
    </button>
  </div>
);

const NavigationBar = () => (
  <div className="absolute top-[235px] right-[3px] rounded border border-[#6b6f76] bg-[#5d6167]">
    <svg viewBox="0 0 30 210" className="w-[30px]" fill="none" stroke="#43484e" aria-label="Navigation bar">
      <circle cx="25" cy="5" r="4" fill="#43484e" stroke="none" />
      <path d="m23.500 3.500 3 3M26.500 3.500l-3 3" stroke="#6b6f76" />
      <path d="M26 19v10.500A10.500 10.500 0 1 1 15.500 19z" />
      <circle cx="15.500" cy="29.500" r="5.500" strokeWidth="1.600" />
      <path d="m8.500 23 3 3M22.500 23l-3 3M9.500 36l2-3M21.500 36l-2-3" />
      <path d="M13 49h6l-3 3zM13 119h6l-3 3zM13 157h6l-3 3z" fill="#43484e" stroke="none" />
      <path d="M2 56.500h26M2 164.500h26" stroke="#74777c" />
      <path d="M10 83c-2-5-5-8-6-10 1-2 3-1 5 2l-2-10c1-2 3-1 3 1l2 7V63c1-2 3-1 3 0l1 9 2-8c1-2 3-1 3 1l-1 9 3-6c2-1 2 1 2 2-2 6-3 9-5 13z" strokeWidth="1.300" />
      <path d="m4 89 15 15M19 89 4 104M4 93v-4h4M15 89h4v4M4 100v4h4" strokeWidth="1.300" />
      <circle cx="20" cy="104" r="5" strokeWidth="1.600" />
      <path d="m23.500 107.500 4.500 5" strokeWidth="3" />
      <path d="M13.500 148v-16h-3l5-5 5 5h-3v16z" strokeWidth="1.300" />
      <path d="M7 143c-4-2-4-5 0-7 6-2 14-2 18 0 4 3 1 6-5 7H10" strokeWidth="1.600" />
      <path d="m6 143 6-4v8z" fill="#43484e" stroke="none" />
      <path d="M4.500 169.500h6v6h-6zM12.500 169.500h6v6h-6zM20.500 169.500h6v6h-6zM4.500 178.500h16v13h-16z" strokeWidth="1.300" />
      <path d="m9 181 7 4-7 4z" fill="#43484e" />
      <circle cx="25" cy="205" r="4" fill="#43484e" stroke="none" />
      <path d="M23 204h4l-2 3z" stroke="#6b6f76" />
    </svg>
  </div>
);

const DocumentControls = () => (
  <div className="absolute top-[8px] right-[11px] flex items-center gap-[9px]">
    <button type="button" aria-label="Minimize drawing">
      <svg viewBox="0 0 11 12" className="w-[11px]" aria-hidden="true"><path d="M.5 6.500h10v3H.5z" fill="#fff" /></svg>
    </button>
    <button type="button" aria-label="Restore drawing">
      <svg viewBox="0 0 11 12" className="w-[11px]" fill="none" stroke="#fff" aria-hidden="true">
        <path d="M3 1.500h7.500V9" />
        <path d="M1.500 4.500h6v6h-6z" strokeWidth="2" />
      </svg>
    </button>
    <button type="button" aria-label="Close drawing">
      <svg viewBox="0 0 10 12" className="w-[10px]" stroke="#fff" strokeWidth="2.200" aria-hidden="true">
        <path d="m1 2 8 8M9 2l-8 8" />
      </svg>
    </button>
  </div>
);

const Viewport = () => (
  <main className="relative min-h-0 flex-1 overflow-hidden border-l-2 border-[#8d8d8d] border-r-2 border-r-[#c4c4c4] bg-[#212830]">
    <ModelDrawing />
    <p className="relative pt-[5px] pl-1 leading-4 font-semibold text-[#dcdcdc]">[−] [Top] [2D Wireframe]</p>
    <DocumentControls />
    <ViewCube />
    <NavigationBar />
    <DynamicInput />
  </main>
);

/* Layout tabs, command line and status bar */

const SHEET_ARROWS = [
  { label: "First layout", d: "M4.500 3v9M11 3v9L6 7.500z" },
  { label: "Previous layout", d: "M10 3v9L5 7.500z" },
  { label: "Next layout", d: "M5 3v9l5-4.500z" },
  { label: "Last layout", d: "M10.500 3v9M4 3v9l5-4.500z" },
];

const Slant = () => (
  <svg viewBox="0 0 8 16" className="h-4 w-2" stroke="#777" aria-hidden="true">
    <path d="M7.500 0 1 16" strokeWidth="1.300" />
  </svg>
);

const LayoutTabs = () => (
  <nav
    aria-label="Layouts"
    className="flex h-[18px] shrink-0 items-start border-t border-b border-t-[#777] border-b-white bg-[#f0f0f0] pl-[2px] text-black"
  >
    {SHEET_ARROWS.map((arrow) => (
      <button key={arrow.label} type="button" aria-label={arrow.label} className="border-r border-b border-[#9a9a9a]">
        <svg viewBox="0 0 14 15" className="h-[15px] w-[14px]" fill="#555" stroke="#555" aria-hidden="true">
          <path d={arrow.d} />
        </svg>
      </button>
    ))}
    <button
      type="button"
      className="h-4 w-[54px] bg-[#212830] leading-4 text-white [clip-path:polygon(0_0,100%_0,90%_100%,10%_100%)]"
    >
      Model
    </button>
    <button type="button" className="px-[3px] leading-4">Layout1</button>
    <Slant />
    <button type="button" className="px-[3px] leading-4">Layout2</button>
    <Slant />
  </nav>
);

const CommandLine = () => (
  <section
    aria-label="Command line"
    className="flex shrink-0 border-t-4 border-[#696969] bg-[#c8c8c8] [font-family:'DejaVu_Sans_Mono',monospace] text-[12px] text-black"
  >
    <div className="w-4 shrink-0 border-r border-[#eee] bg-[#a2a2a2] pt-1 pl-[2px]">
      <div className="h-[3px] w-3 border-y border-dotted border-[#333]" />
    </div>
    <div className="min-w-0 flex-1">
      <div className="h-[39px] border-b border-[#9a9a9a] pt-px leading-[15px] whitespace-pre">
        <p>Command: Specify opposite corner or [Fence/WPolygon/CPolygon]:</p>
        <p>Command: *Cancel*</p>
      </div>
      <label className="flex h-[18px] items-end bg-white leading-[15px]">
        Command:
        <input type="text" className="ml-2 h-4 flex-1 outline-none" />
      </label>
    </div>
  </section>
);

interface StatusToggle {
  label: string;
  on: boolean;
  drawing: ReactNode;
}

const TOGGLES: StatusToggle[] = [
  {
    label: "Infer constraints",
    on: false,
    drawing: (
      <>
        <path d="M6.500 0v12M0 5.500h12M4.500 3.500h4v4h-4z" stroke="#222" />
        <path d="M12.500 15.500v-6h3v3h-3" stroke={BLUE} strokeWidth="1.300" />
      </>
    ),
  },
  {
    label: "Snap mode",
    on: false,
    drawing: (
      <>
        <path d="M2 3.500h9M2 6.500h9M2 9.500h9M2 12.500h9" stroke="#333" strokeDasharray="1 2" />
        <path d="M13.500 2v8M13.500 11v2" stroke="#111" />
      </>
    ),
  },
  {
    label: "Grid display",
    on: true,
    drawing: (
      <path d="M.5.500h15v15H.5zM3.500 0v16M6.500 0v16M9.500 0v16M12.500 0v16M0 3.500h16M0 6.500h16M0 9.500h16M0 12.500h16" stroke="#333" fill="#f4fafc" />
    ),
  },
  {
    label: "Ortho mode",
    on: false,
    drawing: <path d="M1.500 1v14H16M2 9.500h5.500V15" stroke="#666" />,
  },
  {
    label: "Polar tracking",
    on: true,
    drawing: (
      <>
        <path d="M12 9a5 5 0 1 1-3.500-4.500" stroke="#333" strokeWidth="1.300" />
        <path d="M7 9.500h8M7 9.500 14 2M12 5v4" stroke="#222" />
      </>
    ),
  },
  {
    label: "Object snap",
    on: true,
    drawing: (
      <>
        <path d="M2.500 3.500h13v12h-13z" fill="#f2f3f8" stroke="#444" />
        <circle cx="2.500" cy="2.500" r="2" fill="#fff" stroke="#e0521e" />
      </>
    ),
  },
  {
    label: "3D object snap",
    on: false,
    drawing: (
      <>
        <path d="M3 5 7 1h8v9l-4 4H3z" fill="#dfe1e8" stroke="#444" />
        <path d="M3 5h8v9M11 5l4-4" stroke="#888" />
        <circle cx="3" cy="13" r="2" fill="#fff" stroke="#e0521e" />
      </>
    ),
  },
  {
    label: "Object snap tracking",
    on: true,
    drawing: <path d="M12 3 3 13.500h11M8.500 7.500c2 1 2.500 3 2.500 6" stroke="#222" />,
  },
  {
    label: "Dynamic UCS",
    on: true,
    drawing: (
      <>
        <path d="M2.500 1v13.500H15M3 14l7-7M.5 3l2-2 2 2M13 12.500l2 2-2 1.500" stroke="#333" />
        <path d="m14 0-4 5h3l-1 4 4-5h-3z" fill="#f7a41d" stroke="#b86c08" strokeWidth=".5" />
      </>
    ),
  },
  {
    label: "Dynamic input",
    on: true,
    drawing: (
      <>
        <path d="M6.500 3v9M2 7.500h9" stroke="#111" strokeWidth="1.300" />
        <path d="M8.500 9.500h6v3h-6z" fill="#fff" stroke="#111" />
      </>
    ),
  },
  {
    label: "Line weight",
    on: false,
    drawing: (
      <>
        <path d="M8 2v12M8 8.500h6" stroke="#111" />
        <path d="M2 8.500h7M8 3v6" stroke="#111" strokeWidth="2.200" />
      </>
    ),
  },
  {
    label: "Transparency",
    on: true,
    drawing: (
      <>
        <path d="M.5.500h15v15H.5z" fill="#e8f4fb" stroke="#1762b4" strokeWidth="1.600" />
        <path d="M2 4h12M2 8h12M2 12h12" stroke="#8fbce0" strokeWidth="2" strokeDasharray="2 2" />
        <path d="M4 6h10M4 10h10" stroke="#8fbce0" strokeWidth="2" strokeDasharray="2 2" />
      </>
    ),
  },
  {
    label: "Quick properties",
    on: true,
    drawing: (
      <>
        <path d="M4.500 3.500h7v10h-7z" fill="#fff" stroke="#111" strokeWidth="1.400" />
        <path d="M6 6h1M8 6h2M6 8.500h1M8 8.500h2M6 11h1M8 11h2" stroke="#111" />
      </>
    ),
  },
  {
    label: "Selection cycling",
    on: false,
    drawing: (
      <>
        <path d="M3.500 0v7M0 3.500h7" stroke="#444" />
        <path d="M5.500 5.500h6v6h-6z" fill="#eee" stroke="#444" />
        <path d="M8.500 9.500h7v6h-7z" fill="#9bd27c" stroke="#2f6e1b" />
      </>
    ),
  },
];

const STATUS_OFF = "bg-gradient-to-b from-[#b9b9b9] to-[#9b9b9b]";
const STATUS_BUTTON = "flex h-full items-center justify-center border-r border-[#4a4a4a]";

const StatusIcon = ({ children }: ChildrenProps) => (
  <svg viewBox="0 0 16 16" className="size-4 shrink-0" fill="none" aria-hidden="true">
    {children}
  </svg>
);

const StatusButton = ({ label, icon }: ToolProps) => (
  <button type="button" aria-label={label} className={clsx(STATUS_BUTTON, STATUS_OFF, "w-[22px]")}>
    {icon}
  </button>
);

const COMPASS = "M8 1 6.500 4v5L1 14l1 1 5-2.500L8 15l1-2.500 5 2.500 1-1-5.500-5V4z";

const StatusBar = () => (
  <footer className="flex h-6 shrink-0 items-stretch border-t border-b-2 border-t-black border-b-[#6f6a66] bg-gradient-to-b from-[#7b7b7b] to-[#929292] text-black">
    <output className="flex w-[184px] items-center border-r border-[#4a4a4a] pl-3 whitespace-pre text-[#a4a4a4]">
      945.6813,  1660.2566, 0.0000
    </output>
    {TOGGLES.map(({ label, on, drawing }) => (
      <button
        key={label}
        type="button"
        aria-label={label}
        aria-pressed={on}
        className={clsx(
          STATUS_BUTTON,
          "w-[22px]",
          on ? "bg-gradient-to-b from-[#cfe9f0] via-[#9fd0de] to-[#bfe3ec]" : STATUS_OFF,
        )}
      >
        <StatusIcon>{drawing}</StatusIcon>
      </button>
    ))}

    <div className="ml-auto flex items-stretch">
      <button type="button" className={clsx(STATUS_BUTTON, STATUS_OFF, "w-[45px] border-l")}>MODEL</button>
      <StatusButton
        label="Quick view layouts"
        icon={
          <StatusIcon>
            <path d="M3 1.500h11v10H3z" fill="#f0f0f0" stroke="#333" />
            <path d="M6 4v6h5z" stroke="#222" strokeWidth="1.300" />
            <path d="M1 14.500h15" stroke="#222" strokeWidth="1.500" />
          </StatusIcon>
        }
      />
      <StatusButton
        label="Quick view drawings"
        icon={
          <StatusIcon>
            <path d="M.5 2.500h7v7h-7zM8.500 2.500h7v7h-7z" fill="#f0f0f0" stroke="#333" />
            <path d="M0 13h16" stroke="#444" strokeWidth="2" />
          </StatusIcon>
        }
      />
      <span className="w-3 border-r border-[#4a4a4a]" />
      <button type="button" className={clsx(STATUS_BUTTON, STATUS_OFF, "w-[51px] gap-1")}>
        <StatusIcon><path d={COMPASS} fill="#f3f3f3" stroke="#444" /></StatusIcon>
        1:1
        <Caret className="w-[7px] text-black" />
      </button>
      <StatusButton
        label="Annotation visibility"
        icon={
          <StatusIcon>
            <path d={COMPASS} fill="#f3f3f3" stroke="#444" />
            <circle cx="13" cy="9" r="2.500" fill="#ffd45c" stroke="#d9791c" />
            <path d="M12 12h2v3h-2z" fill="#eee" />
          </StatusIcon>
        }
      />
      <StatusButton
        label="Auto scale"
        icon={<StatusIcon><path d={COMPASS} fill="#c4c4c4" stroke="#777" /></StatusIcon>}
      />
      <span className="w-[6px] border-r border-[#4a4a4a]" />
      <StatusButton label="Workspace switching" icon={<Icon><GearShape /></Icon>} />
      <StatusButton label="Toolbar lock" icon={<UnlockIcon fill="#f0f0f0" />} />
      <StatusButton
        label="Hardware acceleration"
        icon={
          <StatusIcon>
            <path d="M1 3.500h13v6H1z" fill="#9fb0c2" stroke="#4e5d6e" />
            <path d="M3.500 1v2M6.500 1v2M9.500 1v2M12 1v2M3.500 10v2M6.500 10v2" stroke="#4e5d6e" />
            <circle cx="13" cy="10" r="2.500" fill="#d4ecfb" stroke="#3d84bd" />
            <path d="M12 13h2v3h-2z" fill="#eee" />
          </StatusIcon>
        }
      />
      <div className="flex w-[52px] items-center gap-[5px] bg-[#8e8e8e] pl-1">
        <button type="button" aria-label="Drawing status">
          <StatusIcon>
            <path d="M2 2h9l4 4v9H2z" fill="#2f62a6" stroke="#173a6c" />
            <path d="M1 9h8v6H1z" fill="#f2cb3a" />
            <path d="m1 2 6 5M7 2 1 7" stroke="#fff" />
            <path d="m7 12 3 3 6-7" stroke="#3caa2c" strokeWidth="2" />
          </StatusIcon>
        </button>
        <button type="button" aria-label="Hints"><BulbIcon /></button>
      </div>
      <button type="button" aria-label="Status bar menu" className={clsx(STATUS_BUTTON, STATUS_OFF, "w-[11px] border-l")}>
        <Caret className="w-[5px] text-black" />
      </button>
      <button type="button" aria-label="Clean screen" className={clsx(STATUS_OFF, "flex w-6 items-center justify-center")}>
        <StatusIcon>
          <path d="M1.500 1.500h13v13h-13z" fill="#f4f4f6" stroke="#333" />
          <path d="M2 2.500h12" stroke="#555" strokeWidth="2" />
        </StatusIcon>
      </button>
    </div>
  </footer>
);

const App = () => {
  return (
    <div className="flex h-screen flex-col overflow-hidden bg-[#696969] [font-family:'Open_Sans','Noto_Sans',sans-serif] text-[11px]">
      <Header />
      <Ribbon />
      <div className="h-[7px] shrink-0 border-b border-[#a8a8a8] bg-[#666]" />
      <Viewport />
      <LayoutTabs />
      <CommandLine />
      <StatusBar />
    </div>
  );
};

export default App;
